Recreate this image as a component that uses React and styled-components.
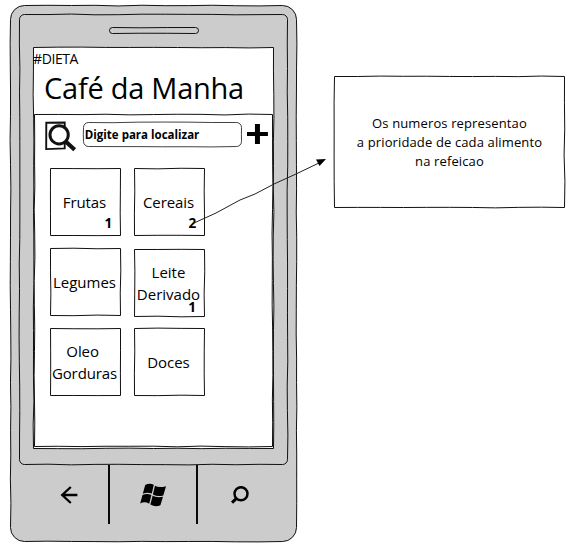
import React from "react";
import styled, { createGlobalStyle } from "styled-components";

const GlobalStyle = createGlobalStyle`
  * { box-sizing: border-box; }
  body {
    margin: 0;
    background: #fff;
    color: #000;
    font-family: "Open Sans", "Noto Sans", sans-serif;
  }
`;

/* Builds a hand-drawn looking rounded rectangle. */
function sketchPath(w, h, r, seed) {
  let s = seed * 7919 + 13;
  const rnd = () => {
    s = (s * 1103515245 + 12345) % 2147483648;
    return (s / 2147483648 - 0.5) * 0.9;
  };
  const edge = (x1, y1, x2, y2) => {
    const len = Math.hypot(x2 - x1, y2 - y1);
    const n = Math.max(2, Math.round(len / 24));
    const horizontal = y1 === y2;
    let out = "";
    for (let i = 1; i <= n; i += 1) {
      const last = i === n;
      const x = x1 + ((x2 - x1) * i) / n + (!horizontal && !last ? rnd() : 0);
      const y = y1 + ((y2 - y1) * i) / n + (horizontal && !last ? rnd() : 0);
      out += `L${x.toFixed(2)} ${y.toFixed(2)}`;
    }
    return out;
  };
  const a = 0.5;
  const W = w - 0.5;
  const H = h - 0.5;
  const corner = (x, y) => (r ? `A${r} ${r} 0 0 1 ${x} ${y}` : "");
  return (
    `M${a + r} ${a}` +
    edge(a + r, a, W - r, a) + corner(W, a + r) +
    edge(W, a + r, W, H - r) + corner(W - r, H) +
    edge(W - r, H, a + r, H) + corner(a, H - r) +
    edge(a, H - r, a, a + r) + corner(a + r, a) + "Z"
  );
}

const Outline = styled.svg`
  position: absolute;
  inset: 0;
  z-index: -1;
  overflow: visible;
`;

function Sketch({ w, h, r = 0, seed = 1, fill = "#fff", line = 1 }) {
  return (
    <Outline width={w} height={h} aria-hidden="true">
      <path d={sketchPath(w, h, r, seed)} fill={fill} stroke="#111" strokeWidth={line} />
    </Outline>
  );
}

const Page = styled.main`
  position: relative;
  display: flex;
  align-items: flex-start;
  gap: 37px;
  width: 579px;
  height: 559px;
  padding: 5px 0 0 10px;
  overflow: hidden;
`;

const Phone = styled.section`
  position: relative;
  isolation: isolate;
  display: flex;
  flex-direction: column;
  width: 287px;
  height: 537px;
  padding: 9px 9px 0 9px;
`;

const Bezel = styled.div`
  position: relative;
  isolation: isolate;
  display: flex;
  flex-direction: column;
  align-items: center;
  width: 269px;
  height: 451px;
  padding-top: 13px;
`;

const Speaker = styled.div`
  position: relative;
  isolation: isolate;
  width: 90px;
  height: 7px;
  margin-bottom: 13px;
`;

const Screen = styled.div`
  position: relative;
  isolation: isolate;
  width: 241px;
  height: 402px;
`;

const Header = styled.header`
  height: 67px;
  white-space: nowrap;
`;

const AppName = styled.div`
  padding-top: 2px;
  font-size: 14px;
  line-height: 20px;
  letter-spacing: -0.4px;
`;

const Title = styled.h1`
  margin: 0 0 0 11px;
  font-size: 29px;
  font-weight: 400;
  line-height: 37px;
  letter-spacing: -0.25px;
`;

const Content = styled.div`
  position: relative;
  isolation: isolate;
  width: 239px;
  height: 333px;
  margin-left: 1px;
  padding: 7px 5px 0 11px;
`;

const SearchBar = styled.div`
  display: flex;
  align-items: flex-start;
  height: 47px;
`;

const SearchField = styled.div`
  position: relative;
  isolation: isolate;
  width: 159px;
  height: 25px;
  margin: 1px 6px 0 6px;
  padding-left: 2px;
  font-size: 11.5px;
  font-weight: 700;
  line-height: 25px;
  white-space: nowrap;
`;

const Tiles = styled.div`
  display: grid;
  grid-template-columns: 71px 71px;
  grid-auto-rows: 68px;
  gap: 12px 13px;
  margin-left: 5px;
`;

const Tile = styled.div`
  position: relative;
  isolation: isolate;
  display: flex;
  align-items: center;
  justify-content: center;
  margin-top: ${(p) => p.$drop || 0}px;
  margin-bottom: ${(p) => -(p.$drop || 0)}px;
  padding-right: 2px;
  font-size: 15px;
  line-height: 22px;
  letter-spacing: ${(p) => p.$track}px;
  text-align: center;
  white-space: pre;
`;

const Priority = styled.span`
  position: absolute;
  right: 9px;
  bottom: ${(p) => (p.$low ? 0 : 3)}px;
  font-size: 13.5px;
  font-weight: 700;
  line-height: 20px;
`;

const Buttons = styled.nav`
  display: flex;
  height: 59px;
`;

const HardwareButton = styled.div`
  display: flex;
  align-items: center;
  justify-content: center;
  width: ${(p) => p.$w}px;
  border-right: ${(p) => (p.$last ? "0" : "2px solid #0a0a0a")};
  padding: 1px 0 0 ${(p) => p.$indent || 0}px;
`;

const Note = styled.aside`
  position: relative;
  isolation: isolate;
  display: flex;
  align-items: center;
  justify-content: center;
  width: 231px;
  height: 132px;
  margin-top: 71px;
  font-size: 13px;
  line-height: 19px;
  letter-spacing: 0.13px;
  text-align: center;
  white-space: pre;
`;

const Arrow = styled.svg`
  position: absolute;
  left: 190px;
  top: 150px;
`;

const tiles = [
  { text: "Frutas", priority: 1, track: -0.1 },
  { text: "Cereais", priority: 2, track: -0.1 },
  { text: "Legumes", track: 0 },
  { text: "Leite\nDerivado", priority: 1, track: 0, drop: 1 },
  { text: "Oleo \nGorduras", track: -0.1 },
  { text: "Doces", track: -0.05 },
];

function FindIcon() {
  return (
    <svg width="32" height="32" viewBox="0 0 32 32" fill="none" stroke="#111">
      <path d="M1.3 1.7L19.8 1.4V27.5L1.2 28.2Z" strokeWidth="1.9" />
      <circle cx="14.2" cy="13.8" r="9.2" fill="#fff" strokeWidth="3" />
      <path d="M20.5 20.3L29.8 28.8" strokeWidth="4.2" />
    </svg>
  );
}

const PlusGlyph = styled.svg`
  margin-top: 3px;
`;

function PlusIcon() {
  return (
    <PlusGlyph width="21" height="20" viewBox="0 0 21 20">
      <path d="M8 0h5v8h8v4h-8v8H8v-8H0V8h8Z" />
    </PlusGlyph>
  );
}

function BackIcon() {
  return (
    <svg width="18" height="18" viewBox="0 0 18 18" fill="none" stroke="#000" strokeWidth="2.3">
      <path d="M17.4 9H2.2M10.8 1L2.2 9L10.8 17" />
    </svg>
  );
}

function WindowsIcon() {
  return (
    <svg width="27" height="24" viewBox="0 0 27 24">
      <path d="M5.2 2Q9.5-.3 13.8 1.8L11.8 10.6Q7.4 8.8 2.8 10.7Z" />
      <path d="M15 2.7Q18.8 5.2 26 3.2L23.3 12.4Q17.5 14 12.9 11.4Z" />
      <path d="M2.5 12Q6.8 10 11.4 11.9L9.2 20.7Q5 18.2.2 20.4Z" />
      <path d="M12.6 12.8Q16.5 15 23 13.8L20.4 22.3Q15.2 24.5 10.4 21.4Z" />
    </svg>
  );
}

function LensIcon() {
  return (
    <svg width="18" height="18" viewBox="0 0 18 18" fill="none" stroke="#000">
      <circle cx="10" cy="7.7" r="6.5" strokeWidth="2.5" />
      <path d="M5.5 12.3L1 16.6" strokeWidth="3" />
    </svg>
  );
}

export default function App() {
  return (
    <>
      <GlobalStyle />
      <Page>
        <Phone>
          <Sketch w={287} h={537} r={14} seed={2} fill="#ccc" />
          <Bezel>
            <Sketch w={269} h={451} r={5} seed={3} fill="#ccc" />
            <Speaker>
              <Sketch w={90} h={7} r={3} seed={4} fill="#ccc" />
            </Speaker>
            <Screen>
              <Sketch w={241} h={402} seed={5} />
              <Header>
                <AppName>#DIETA</AppName>
                <Title>Café da Manha</Title>
              </Header>
              <Content>
                <Sketch w={239} h={333} seed={6} />
                <SearchBar>
                  <FindIcon />
                  <SearchField>
                    <Sketch w={159} h={25} r={5} seed={7} line={0.8} />
                    Digite para localizar
                  </SearchField>
                  <PlusIcon />
                </SearchBar>
                <Tiles>
                  {tiles.map((t, i) => (
                    <Tile key={t.text} $track={t.track} $drop={t.drop}>
                      <Sketch w={71} h={68} seed={i + 10} />
                      {t.text}
                      {t.priority && <Priority $low={Boolean(t.drop)}>{t.priority}</Priority>}
                    </Tile>
                  ))}
                </Tiles>
              </Content>
            </Screen>
          </Bezel>
          <Buttons>
            <HardwareButton $w={91} $indent={10}><BackIcon /></HardwareButton>
            <HardwareButton $w={88} $indent={1}><WindowsIcon /></HardwareButton>
            <HardwareButton $w={83} $last><LensIcon /></HardwareButton>
          </Buttons>
        </Phone>
        <Note>
          <Sketch w={231} h={132} seed={20} />
          {"Os numeros representao\na prioridade de cada alimento\nna refeicao"}
        </Note>
        <Arrow width="140" height="78" viewBox="190 150 140 78" aria-hidden="true">
          <path d="M194 223L216 213L240 200L255 194L274 184L296 174L321 162" fill="none" stroke="#222" />
          <path d="M326 159L316 159.5L319.5 166Z" />
        </Arrow>
      </Page>
    </>
  );
}
